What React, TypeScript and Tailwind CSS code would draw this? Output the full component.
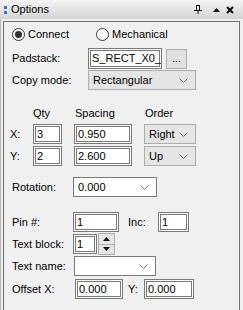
import React from 'react';

const font = "font-['Liberation_Sans',Arial,sans-serif]";

const Chevron: React.FC = () => (
    <svg width="9" height="5" viewBox="0 0 9 5" className="shrink-0">
        <path d="M0.5 0.5 L4.5 4.5 L8.5 0.5" fill="none" stroke="#707070" strokeWidth="1" />
    </svg>
);

const TextBox: React.FC<{ value: string, className?: string }> = ({ value, className = '' }) => (
    <div className={`flex items-center bg-white border border-[#7a7a7a] shadow-[inset_0_0_0_1px_#ffffff,inset_0_0_0_2px_#7a7a7a] pl-[3px] text-black leading-none overflow-hidden whitespace-nowrap ${className}`}>
        {value}
    </div>
);

const Select: React.FC<{ value: string, grey?: boolean, className?: string }> = ({ value, grey, className = '' }) => (
    <div className={`flex items-center justify-between border pl-[4px] pr-[7px] leading-none ${grey ? 'bg-[#e5e5e5] border-[#acacac]' : 'bg-white border-[#7a7a7a]'} ${className}`}>
        <span>{value}</span>
        <Chevron />
    </div>
);

const Radio: React.FC<{ checked?: boolean }> = ({ checked }) => (
    <div className="w-[13px] h-[13px] rounded-full border border-[#333] bg-white flex items-center justify-center shrink-0">
        {checked && <div className="w-[7px] h-[7px] rounded-full bg-[#333]" />}
    </div>
);

const TitleBar: React.FC = () => (
    <div className="h-[19px] flex items-center bg-gradient-to-b from-[#f4f4f4] to-[#d4d4d4] pl-[4px] pr-[9px]">
        <div className="flex flex-col gap-[2px] mr-[4px]">
            <div className="w-[3px] h-[3px] bg-[#2a7ad6]" />
            <div className="w-[3px] h-[3px] bg-[#2a7ad6]" />
        </div>
        <span className="text-[11px] text-black">Options</span>
        <div className="ml-auto flex items-center">
            <svg width="8" height="9" viewBox="0 0 8 9">
                <path d="M2 0.5 H6 M2.5 0.5 V5 M5.5 0.5 V5 M0 5.5 H8 M4 5.5 V9" fill="none" stroke="#111" strokeWidth="1" />
            </svg>
            <svg width="7" height="4" viewBox="0 0 7 4" className="ml-[11px]">
                <path d="M0 4 L3.5 0 L7 4 Z" fill="#111" />
            </svg>
            <svg width="8" height="8" viewBox="0 0 8 8" className="ml-[6px]">
                <path d="M1 1 L7 7 M7 1 L1 7" fill="none" stroke="#111" strokeWidth="2" />
            </svg>
        </div>
    </div>
);

const App: React.FC = () => {
    return (
        <div className={`w-[243px] h-[310px] bg-[#f0f0f0] text-[11px] text-black overflow-hidden flex flex-col ${font}`}>
            <TitleBar />
            <div className="flex-1 flex flex-col border-l border-[#b4b4b4] pt-[2px] pl-[2px] pr-[3px]">
                <div className="flex-1 border-l border-t border-r border-[#6f6f6f] pl-[8px]">
                    {/* connect / mechanical */}
                    <div className="flex items-center h-[14px] mt-[5px]">
                        <div className="flex items-center gap-[3px] w-[84px]">
                            <Radio checked />
                            <span>Connect</span>
                        </div>
                        <div className="flex items-center gap-[3px]">
                            <Radio />
                            <span>Mechanical</span>
                        </div>
                    </div>

                    <div className="flex items-center h-[21px] mt-[7px]">
                        <span className="w-[76px]">Padstack:</span>
                        <TextBox value="S_RECT_X0_" className="w-[74px] h-[21px]" />
                        <div className="ml-[4px] w-[21px] h-[20px] bg-[#e1e1e1] border border-[#adadad] flex items-center justify-center leading-none">...</div>
                    </div>

                    <div className="flex items-center h-[20px] mt-[1px]">
                        <span className="w-[76px]">Copy mode:</span>
                        <Select value="Rectangular" grey className="w-[108px] h-[20px]" />
                    </div>

                    {/* qty / spacing / order grid */}
                    <div className="flex items-center h-[14px] mt-[16px] pl-[21px]">
                        <span className="w-[42px]">Qty</span>
                        <span className="w-[70px]">Spacing</span>
                        <span>Order</span>
                    </div>
                    <div className="flex items-center h-[20px] mt-[4px] -ml-[2px]">
                        <span className="w-[23px]">X:</span>
                        <TextBox value="3" className="w-[29px] h-[20px]" />
                        <TextBox value="0.950" className="ml-[12px] w-[58px] h-[20px]" />
                        <Select value="Right" grey className="ml-[12px] w-[52px] h-[20px]" />
                    </div>
                    <div className="flex items-center h-[20px] mt-[2px] -ml-[2px]">
                        <span className="w-[23px]">Y:</span>
                        <TextBox value="2" className="w-[29px] h-[20px]" />
                        <TextBox value="2.600" className="ml-[12px] w-[58px] h-[20px]" />
                        <Select value="Up" grey className="ml-[12px] w-[52px] h-[20px]" />
                    </div>

                    <div className="flex items-center h-[20px] mt-[11px]">
                        <span className="w-[61px]">Rotation:</span>
                        <Select value="0.000" className="w-[84px] h-[20px]" />
                    </div>

                    <div className="flex items-center h-[20px] mt-[15px]">
                        <span className="w-[61px]">Pin #:</span>
                        <TextBox value="1" className="w-[46px] h-[20px]" />
                        <span className="ml-[9px] w-[30px]">Inc:</span>
                        <TextBox value="1" className="w-[31px] h-[20px]" />
                    </div>

                    <div className="flex items-center h-[20px] mt-[2px]">
                        <span className="w-[61px]">Text block:</span>
                        <TextBox value="1" className="w-[24px] h-[20px]" />
                        <div className="ml-px w-[17px] h-[22px] flex flex-col border border-[#adadad] bg-[#e6e6e6]">
                            <div className="flex-1 flex items-center justify-center border-b border-[#adadad]">
                                <svg width="7" height="4" viewBox="0 0 7 4"><path d="M0 4 L3.5 0 L7 4 Z" fill="#111" /></svg>
                            </div>
                            <div className="flex-1 flex items-center justify-center">
                                <svg width="7" height="4" viewBox="0 0 7 4"><path d="M0 0 L3.5 4 L7 0 Z" fill="#111" /></svg>
                            </div>
                        </div>
                    </div>

                    <div className="flex items-center h-[20px] mt-[2px]">
                        <span className="w-[62px]">Text name:</span>
                        <Select value="" className="w-[82px] h-[20px]" />
                    </div>

                    <div className="flex items-center h-[20px] mt-[3px]">
                        <span className="w-[63px]">Offset X:</span>
                        <TextBox value="0.000" className="w-[48px] h-[20px]" />
                        <span className="ml-[5px] w-[16px]">Y:</span>
                        <TextBox value="0.000" className="w-[50px] h-[20px]" />
                    </div>
                </div>
            </div>
        </div>
    );
};

export default App;
